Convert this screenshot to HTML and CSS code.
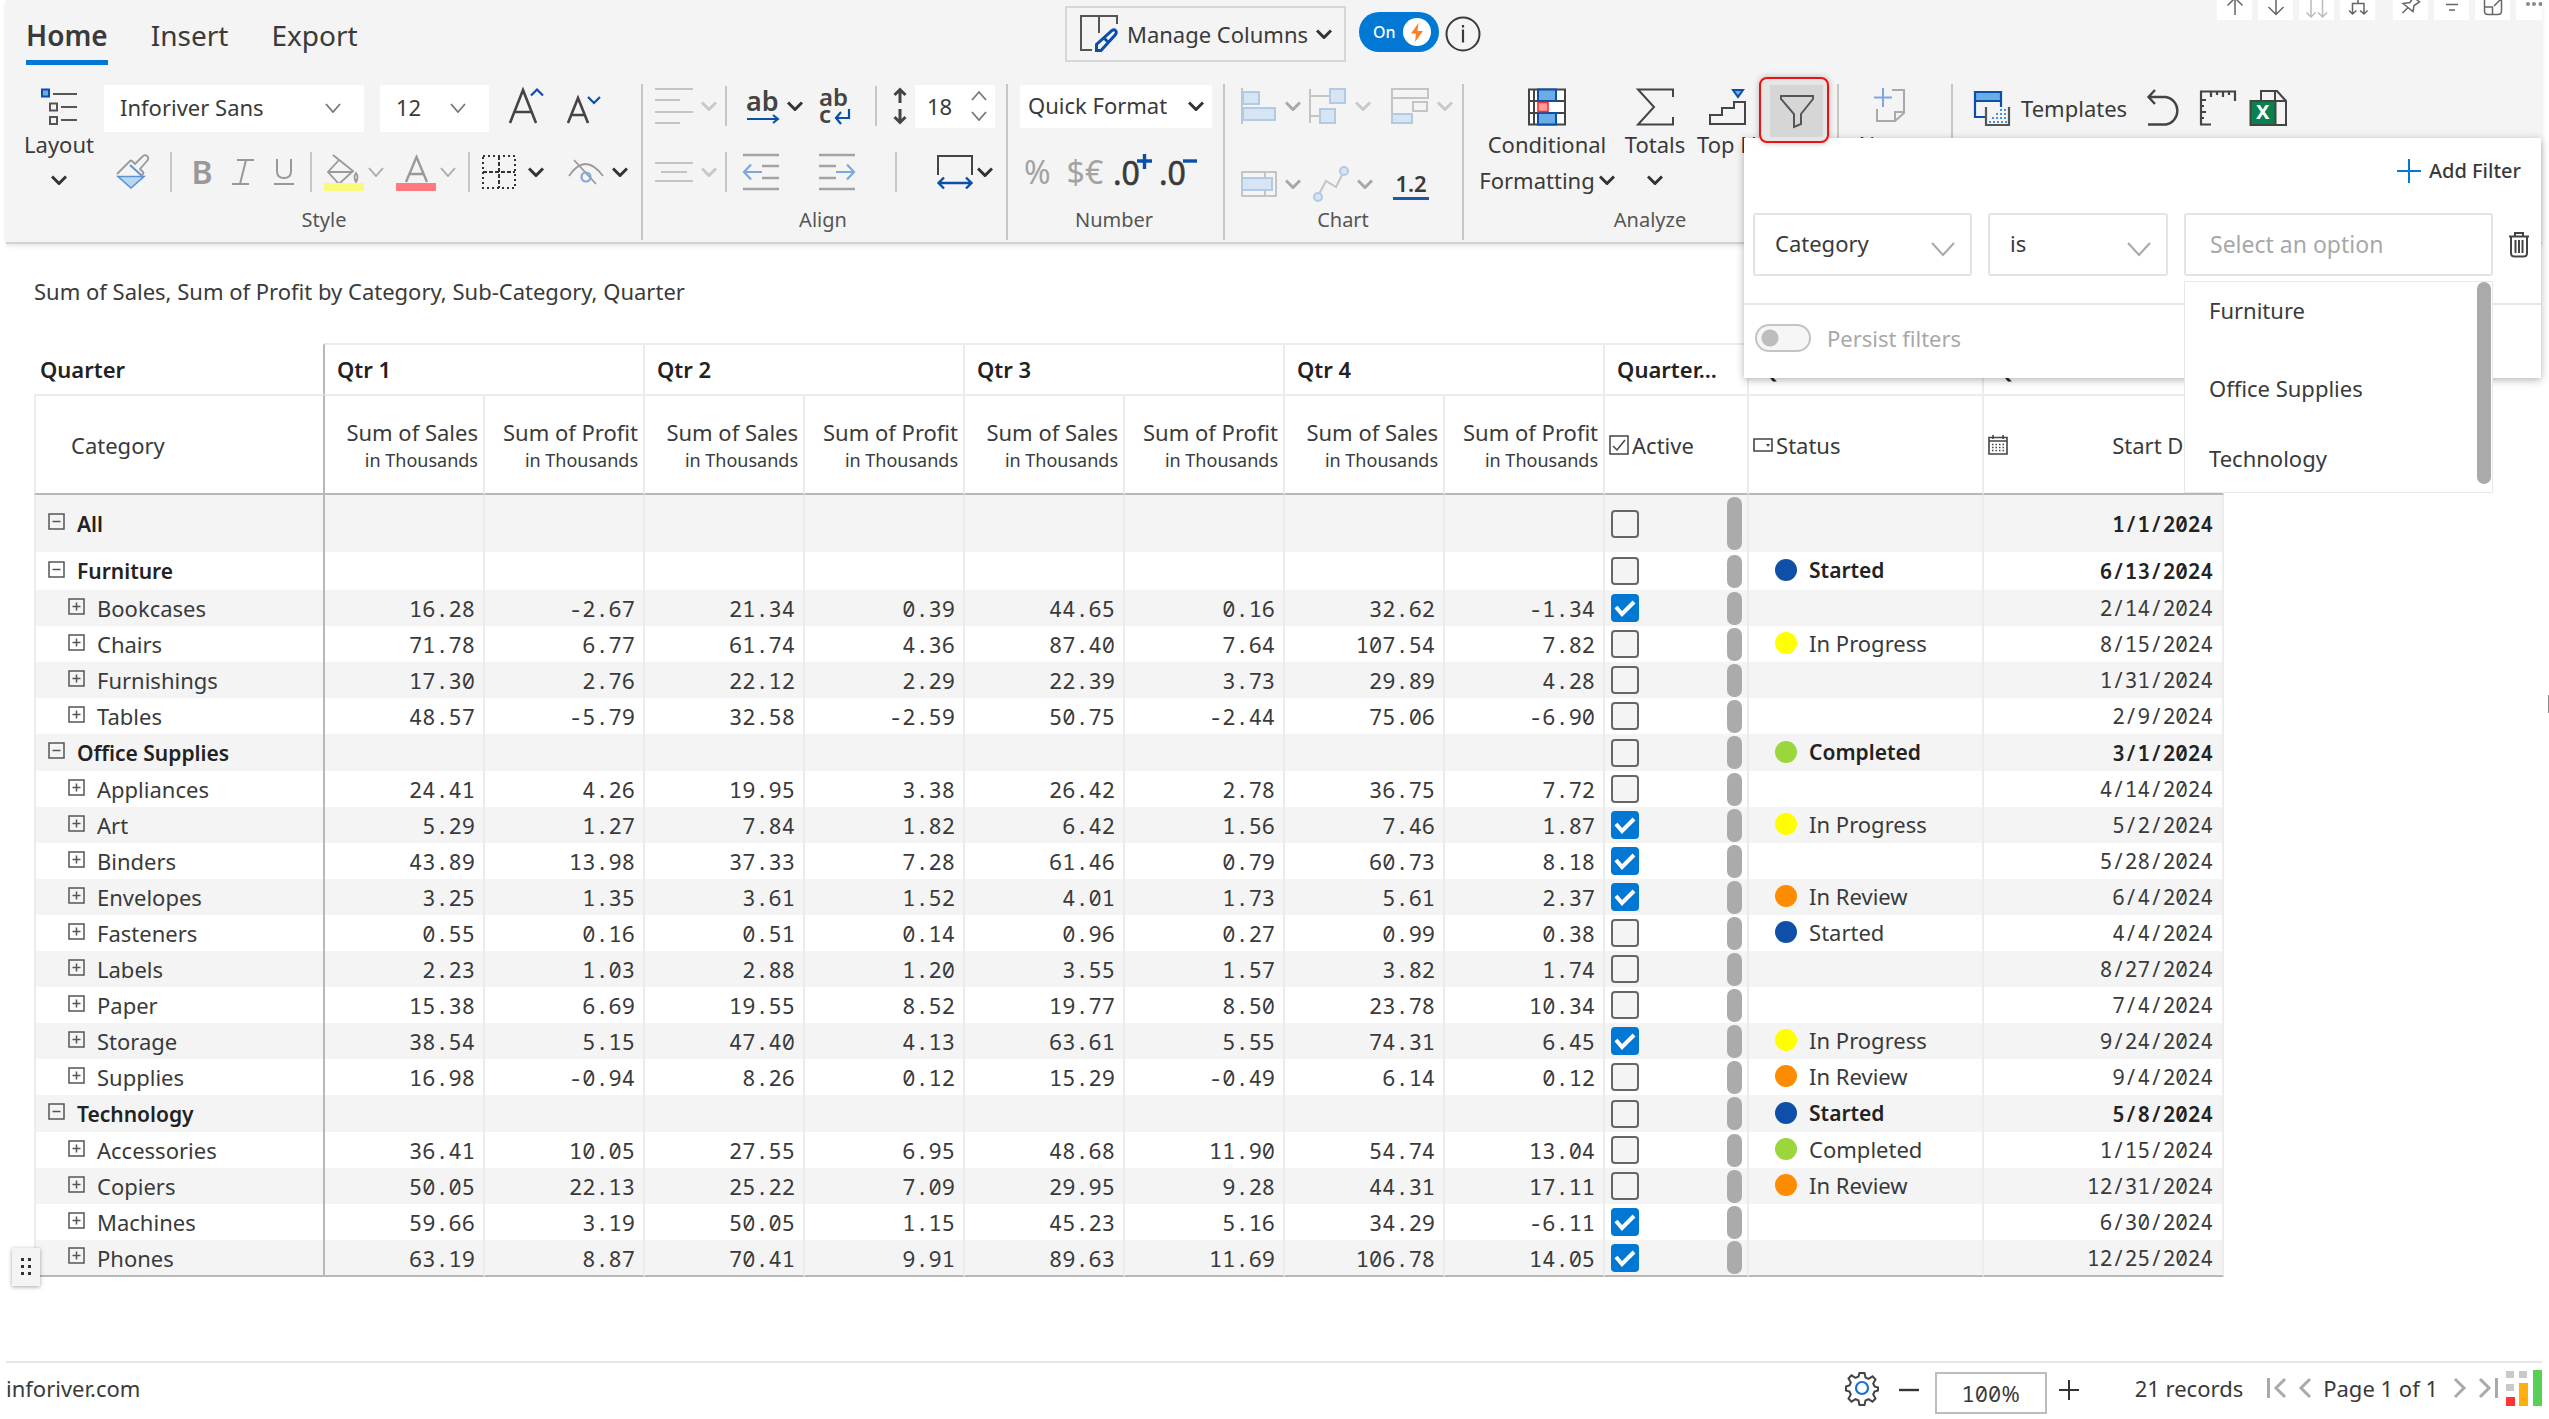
FILE: index.html
```html
<!DOCTYPE html>
<html lang="en">
<head>
<meta charset="utf-8">
<meta name="viewport" content="width=device-width, initial-scale=1">
<title>Inforiver</title>
<link rel="stylesheet" href="styles.css">
</head>
<body>
<svg class="defs" width="0" height="0" aria-hidden="true">
  <symbol id="chev" viewBox="0 0 16 10"><path d="M1 1.500l7 7 7-7" fill="none" stroke="currentColor" stroke-width="3"/></symbol>
  <symbol id="chev-thin" viewBox="0 0 16 10"><path d="M1 1l7 8 7-8" fill="none" stroke="currentColor" stroke-width="1.800"/></symbol>
</svg>

<header class="ribbon">
  <div class="visual-tools">
    <button class="vt" aria-label="Drill up"><svg width="35" height="20" viewBox="0 0 35 20"><path d="M18 15V-6M10.500 5.500L18-2l7.500 7.500"/></svg></button>
    <button class="vt" aria-label="Drill down"><svg width="35" height="20" viewBox="0 0 35 20"><path d="M18-6v20M10.500 7l7.500 7.500L25.500 7"/></svg></button>
    <button class="vt faint" aria-label="Next level"><svg width="35" height="20" viewBox="0 0 35 20"><path d="M12-4v20M23.500-4v20M7.500 12.500L12 17l4.500-4.500M19 12.500l4.500 4.500 4.500-4.500"/></svg></button>
    <button class="vt" aria-label="Expand all"><svg width="35" height="20" viewBox="0 0 35 20"><path d="M18-4v7M12.500 14V3.500H24V14M9 10.500l3.500 3.500 4-3.500M20 10.500l4 3.500 3.500-3.500"/></svg></button>
    <button class="vt vt-gap" aria-label="Pin"><svg width="35" height="20" viewBox="0 0 35 20"><path d="M9.500 13l5-5M10 3.500l10 8 1-6 5.500-3.500-6-5-3.500 5.500z"/></svg></button>
    <button class="vt" aria-label="Filters"><svg width="35" height="20" viewBox="0 0 35 20"><path d="M12 4.500h12M15 10h6"/></svg></button>
    <button class="vt" aria-label="Focus mode"><svg width="35" height="20" viewBox="0 0 35 20"><path d="M9.500 0v11q0 3.500 3.500 3.500h10q3.500 0 3.500-3.500V0M9.500 7h8v7.500M19 6l7-7"/></svg></button>
    <button class="vt" aria-label="More"><svg width="35" height="20" viewBox="0 0 35 20"><circle cx="12" cy="4" r="2"/><circle cx="18" cy="4" r="2"/><circle cx="24.500" cy="4" r="2"/></svg></button>
  </div>

  <div class="topbar">
    <nav class="tabs">
      <a href="#home" class="tab active">Home</a>
      <a href="#insert" class="tab">Insert</a>
      <a href="#export" class="tab">Export</a>
    </nav>
    <div class="top-center">
      <button class="manage">
        <svg width="40" height="40" viewBox="0 0 40 40"><path d="M13 36H2V2h36v8M20 2v17" fill="none" stroke="#555" stroke-width="2"/><path d="M17.500 36.500v-6L33 16.500q2-1.500 3.500 0t0 4L22 36.500zM25 24l5 5" fill="none" stroke="#0b50a8" stroke-width="3"/></svg>
        <span>Manage Columns</span>
        <svg class="c-dark" width="16" height="10"><use href="#chev"/></svg>
      </button>
      <label class="switch"><input type="checkbox" role="switch" checked><span>On</span>
        <svg width="28" height="28" viewBox="0 0 28 28"><circle cx="14" cy="14" r="14" fill="#fff"/><path d="M15.500 5L8 15.500h5L12 24l8-11h-5.500z" fill="#ff7f27"/></svg></label>
      <button class="info" aria-label="Info"><svg width="36" height="36" viewBox="0 0 36 36"><circle cx="18" cy="18" r="16.500" fill="none" stroke="#3a3a3a" stroke-width="2"/><path d="M18 13.500v13M18 9v2.500" stroke="#3a3a3a" stroke-width="2.200"/></svg></button>
    </div>
  </div>

  <div class="groups">
    <section class="group g-style">
      <button class="tall w80">
        <svg width="38" height="38" viewBox="0 0 38 38"><g fill="none" stroke="#0b50a8" stroke-width="2"><rect x="2" y="1.500" width="7" height="7" fill="#6aace6"/></g><g fill="none" stroke="#555" stroke-width="2"><rect x="10" y="15.500" width="7" height="7"/><rect x="10" y="29" width="7" height="7"/><path d="M13 6h24M21 19h16M21 32h16"/></g></svg>
        <span>Layout</span>
        <span class="line"><svg class="c-dark" width="16" height="10"><use href="#chev"/></svg></span>
      </button>
      <div class="stack">
        <div class="row">
          <div class="sel font"><select aria-label="Font"><option>Inforiver Sans</option></select><svg class="c-mid" width="18" height="10"><use href="#chev-thin"/></svg></div>
          <div class="sel size m16"><select aria-label="Font size"><option>12</option></select><svg class="c-mid" width="18" height="10"><use href="#chev-thin"/></svg></div>
          <button class="ib m20" aria-label="Grow font"><svg width="34" height="42" viewBox="0 0 34 42"><path d="M1 36L14 3l13 33M6 25h16" fill="none" stroke="#444" stroke-width="2.600"/><path d="M22 8.500l6-6 6 6" fill="none" stroke="#0b50a8" stroke-width="2.200"/></svg></button>
          <button class="ib m24" aria-label="Shrink font"><svg width="34" height="42" viewBox="0 0 34 42"><path d="M1 36l10-25 10 25M5 28h12" fill="none" stroke="#444" stroke-width="2.600"/><path d="M21 10l6 6 6-6" fill="none" stroke="#0b50a8" stroke-width="2.200"/></svg></button>
        </div>
        <div class="row row2">
          <button class="ib m12" aria-label="Format painter"><svg width="34" height="34" viewBox="0 0 34 34"><path d="M1 19L14 6q1-1 2 0l3 3 8-8q3-2 5 1 1 2-1 4l-7 8 3 3q1 1 0 2l-3 3" fill="none" stroke="#999" stroke-width="1.800"/><path d="M14 10l11 10" stroke="#5b93d6" stroke-width="2"/><path d="M2 21.500h26L15 33z" fill="#b9d7f2" stroke="#5b93d6" stroke-width="1.600"/></svg></button>
          <i class="sep m20"></i>
          <button class="ib bold m20">B</button>
          <button class="ib m20" aria-label="Italic"><svg width="22" height="26" viewBox="0 0 22 26"><path d="M5 1h17M0 25h17M14 1L8 25" fill="none" stroke="#999" stroke-width="2"/></svg></button>
          <button class="ib m20" aria-label="Underline"><svg width="20" height="26" viewBox="0 0 20 26"><path d="M3 0v12q0 7 7 7t7-7V0M0 25h20" fill="none" stroke="#999" stroke-width="2"/></svg></button>
          <i class="sep m16"></i>
          <button class="ib m12" aria-label="Fill colour"><svg width="40" height="38" viewBox="0 0 40 38"><path d="M9 2l20 16-14 13L4 19 15 7M4 19h25M32 29q-3-5 0-9 3 4 0 9z" fill="none" stroke="#999" stroke-width="1.800"/><path d="M0 30h40v8H0z" fill="#fbfb7b"/></svg></button>
          <svg class="c-soft m4" width="16" height="10"><use href="#chev-thin"/></svg>
          <button class="ib m12" aria-label="Font colour"><svg width="40" height="38" viewBox="0 0 40 38"><path d="M10 29L20.500 4 31 29M13 21h15" fill="none" stroke="#999" stroke-width="2.400"/><path d="M0 30h40v8H0z" fill="#ff7a80"/></svg></button>
          <svg class="c-soft m4" width="16" height="10"><use href="#chev-thin"/></svg>
          <i class="sep m12"></i>
          <button class="ib m12" aria-label="Borders"><svg width="34" height="34" viewBox="0 0 34 34"><path d="M1 1h32v32H1z" fill="none" stroke="#333" stroke-width="2" stroke-dasharray="2 3"/><path d="M17 1v32M1 17h32" stroke="#333" stroke-width="2" stroke-dasharray="4 2"/></svg></button>
          <svg class="c-dark m12" width="16" height="10"><use href="#chev"/></svg>
          <button class="ib m24" aria-label="Show or hide"><svg width="36" height="26" viewBox="0 0 36 26"><path d="M1 17Q17-7 35 17M6 1l22 24" fill="none" stroke="#999" stroke-width="1.800"/><circle cx="18" cy="18" r="4.500" fill="none" stroke="#7fa7db" stroke-width="2.200"/></svg></button>
          <svg class="c-dark m8" width="16" height="10"><use href="#chev"/></svg>
        </div>
      </div>
      <h2 class="name">Style</h2>
    </section>

    <section class="group g-align">
      <div class="stack">
        <div class="row">
          <button class="ib m12" aria-label="Horizontal align"><svg width="38" height="36" viewBox="0 0 38 36"><path d="M0 1h38M0 12h25M0 24h38M0 35h25" stroke="#c4c4c4" stroke-width="2"/></svg></button>
          <svg class="c-faint m8" width="16" height="10"><use href="#chev"/></svg>
          <i class="sep m8"></i>
          <button class="ib m20" aria-label="Overflow text"><svg width="32" height="36" viewBox="0 0 32 36"><text x="-1" y="23" font-size="27" font-weight="600" fill="#444">ab</text><path d="M0 31h30M26 27l5 4-5 4" fill="none" stroke="#0b50a8" stroke-width="2"/></svg></button>
          <svg class="c-dark m8" width="16" height="10"><use href="#chev"/></svg>
          <button class="ib m16" aria-label="Wrap text"><svg width="32" height="38" viewBox="0 0 32 38"><text font-size="24" font-weight="600" fill="#444"><tspan x="0" y="19">ab</tspan><tspan x="0" y="36">c</tspan></text><path d="M30 22v9H17M22 25l-5 6 5 6" fill="none" stroke="#0b50a8" stroke-width="2.200"/></svg></button>
          <i class="sep m24"></i>
          <svg class="m16" width="14" height="38" viewBox="0 0 14 38"><path d="M7 16V2M1.500 8L7 2.500 12.500 8M7 22v14M1.500 30l5.500 5.500 5.500-5.500" fill="none" stroke="#444" stroke-width="3"/></svg>
          <div class="spin m8"><input type="text" value="18" aria-label="Row height"><span class="spin-b"><svg class="c-mid" width="16" height="10" viewBox="0 0 16 10"><path d="M1 9l7-8 7 8" fill="none" stroke="currentColor" stroke-width="1.800"/></svg><svg class="c-mid" width="16" height="10"><use href="#chev-thin"/></svg></span></div>
        </div>
        <div class="row row2">
          <button class="ib m12" aria-label="Vertical align"><svg width="38" height="20" viewBox="0 0 38 20"><path d="M0 1h38M6 10h26M0 19h38" stroke="#c4c4c4" stroke-width="2"/></svg></button>
          <svg class="c-faint m8" width="16" height="10"><use href="#chev"/></svg>
          <i class="sep m8"></i>
          <button class="ib m16" aria-label="Decrease indent"><svg width="36" height="36" viewBox="0 0 36 36"><path d="M0 1h36M19 12h17M19 24h17M0 35h36" stroke="#a3a3a3" stroke-width="2.600"/><path d="M19 18H1M8 10.500L1 18l7 7.500" fill="none" stroke="#7fa7db" stroke-width="2.200"/></svg></button>
          <button class="ib m40" aria-label="Increase indent"><svg width="36" height="36" viewBox="0 0 36 36"><path d="M0 1h36M0 12h17M0 24h17M0 35h36" stroke="#a3a3a3" stroke-width="2.600"/><path d="M17 18h18M28 10.500l7 7.500-7 7.500" fill="none" stroke="#7fa7db" stroke-width="2.200"/></svg></button>
          <i class="sep m40"></i>
          <button class="ib m40" aria-label="Column width"><svg width="36" height="36" viewBox="0 0 36 36"><path d="M1 21V2h34v19" fill="none" stroke="#444" stroke-width="2"/><path d="M2 29h32M7 23.500L1.500 29 7 34.500M29 23.500l5.500 5.500-5.500 5.500" fill="none" stroke="#0b50a8" stroke-width="2.400"/></svg></button>
          <svg class="c-dark m4" width="16" height="10"><use href="#chev"/></svg>
        </div>
      </div>
      <h2 class="name">Align</h2>
    </section>

    <section class="group g-number">
      <div class="stack">
        <div class="row">
          <div class="sel quick m12"><select aria-label="Number format"><option>Quick Format</option></select><svg class="c-dark" width="16" height="10"><use href="#chev"/></svg></div>
        </div>
        <div class="row row2">
          <button class="ib num pale m16">%</button>
          <button class="ib num pale m16">$€</button>
          <button class="ib m12" aria-label="Increase decimals"><svg width="38" height="40" viewBox="0 0 38 40"><text x="-2" y="33" font-size="32" fill="#3a3a3a" stroke="#3a3a3a" stroke-width=".6">.0</text><path d="M22 9h15M29.500 2v15" stroke="#0b50a8" stroke-width="3.400"/></svg></button>
          <button class="ib m8" aria-label="Decrease decimals"><svg width="38" height="40" viewBox="0 0 38 40"><text x="-2" y="33" font-size="32" fill="#3a3a3a" stroke="#3a3a3a" stroke-width=".6">.0</text><path d="M22 9h14" stroke="#0b50a8" stroke-width="3.400"/></svg></button>
        </div>
      </div>
      <h2 class="name">Number</h2>
    </section>

    <section class="group g-chart">
      <div class="stack">
        <div class="row">
          <button class="ib m16" aria-label="Bar chart"><svg width="36" height="36" viewBox="0 0 36 36"><path d="M1 0v36" stroke="#c4c4c4" stroke-width="2"/><path d="M2 4h16v12H2zM2 20h32v12H2z" fill="#d5e5f4" stroke="#b3c9e4" stroke-width="2"/></svg></button>
          <svg class="c-soft m8" width="16" height="10"><use href="#chev"/></svg>
          <button class="ib m8" aria-label="Waterfall chart"><svg width="38" height="36" viewBox="0 0 38 36"><path d="M1 1v34M1 8h20M1 28h10" stroke="#c4c4c4" stroke-width="2"/><path d="M21 1h15v14H21zM11 21h15v14H11z" fill="#d5e5f4" stroke="#b3c9e4" stroke-width="2"/></svg></button>
          <svg class="c-faint m8" width="16" height="10"><use href="#chev"/></svg>
          <button class="ib m20" aria-label="Variance chart"><svg width="38" height="36" viewBox="0 0 38 36"><path d="M1 25V1h36v9H1M22 14h14v9H22z" fill="none" stroke="#c4c4c4" stroke-width="2"/><path d="M1 26h20v9H1z" fill="#d5e5f4" stroke="#b3c9e4" stroke-width="2"/></svg></button>
          <svg class="c-faint m8" width="16" height="10"><use href="#chev"/></svg>
        </div>
        <div class="row row2 low">
          <button class="ib m16" aria-label="Bullet chart"><svg width="36" height="26" viewBox="0 0 36 26"><path d="M1 1h34v24H1zM24 1v24" fill="none" stroke="#c4c4c4" stroke-width="2"/><path d="M1 7h30v12H1z" fill="#d5e5f4" stroke="#b3c9e4" stroke-width="2"/></svg></button>
          <svg class="c-soft m8" width="16" height="10"><use href="#chev"/></svg>
          <button class="ib m12" aria-label="Sparkline"><svg width="36" height="36" viewBox="0 0 36 36"><path d="M6 28l7-13 10 6 7-14" fill="none" stroke="#c4c4c4" stroke-width="2"/><g fill="#d5e5f4" stroke="#b3c9e4" stroke-width="2"><circle cx="5" cy="31" r="4"/><circle cx="31" cy="5" r="4"/></g></svg></button>
          <svg class="c-soft m8" width="16" height="10"><use href="#chev"/></svg>
          <button class="ib onetwo m20">1.2</button>
        </div>
      </div>
      <h2 class="name">Chart</h2>
    </section>

    <section class="group g-analyze">
      <button class="tall w140">
        <svg width="38" height="38" viewBox="0 0 38 38"><path d="M1 1.500h36v35H1zM1 13h36M1 25h36M6 1v36" fill="#fff" stroke="#444" stroke-width="2"/><path d="M10 1.500h18V13H10zM10 25h18v11.500H10z" fill="#6aace6" stroke="#0b50a8" stroke-width="2"/><path d="M10 14.500h10v9H10z" fill="#ff9a9a" stroke="#e33" stroke-width="1.600"/></svg>
        <span>Conditional</span>
        <span class="line">Formatting <svg class="c-dark" width="16" height="10"><use href="#chev"/></svg></span>
      </button>
      <button class="tall w72">
        <svg width="38" height="38" viewBox="0 0 38 38"><path d="M37 9V1.500H2L18 19 2 36.500h35V29" fill="none" stroke="#444" stroke-width="2"/></svg>
        <span>Totals</span>
        <span class="line"><svg class="c-dark" width="16" height="10"><use href="#chev"/></svg></span>
      </button>
      <button class="tall w72">
        <svg width="38" height="38" viewBox="0 0 38 38"><path d="M2 36V27h12v-7h12v-6h11v22z" fill="none" stroke="#444" stroke-width="2"/><path d="M25 2h10l-5 7z" fill="#6aace6" stroke="#0b50a8" stroke-width="2"/></svg>
        <span>Top N</span>
      </button>
      <button class="filter-btn" aria-label="Filter" aria-expanded="true"><span><svg width="36" height="34" viewBox="0 0 36 34"><path d="M2 2h32v3L22 20v10l-7 3V20L2 5z" fill="none" stroke="#555" stroke-width="2"/></svg></span></button>
      <h2 class="name">Analyze</h2>
    </section>

    <section class="group g-notes">
      <button class="tall w100">
        <svg width="38" height="38" viewBox="0 0 38 38"><path d="M22 2h12v23l-9 8H7V21M34 24h-9v9" fill="none" stroke="#aaa" stroke-width="2"/><path d="M4 9.500h18M13 0v19" stroke="#7fa7db" stroke-width="2"/></svg>
        <span>Notes</span>
      </button>
    </section>

    <section class="group g-last">
      <div class="row">
        <button class="templates m20"><svg width="38" height="38" viewBox="0 0 38 38"><path d="M2 3h26v9H2z" fill="#6aace6"/><path d="M12 28H2V3h26v15M2 12h26" fill="none" stroke="#0b50a8" stroke-width="2.200"/><path d="M13 18v18h23V18" fill="none" stroke="#555" stroke-width="2.200"/><path d="M16 33h18M19 29h15M23 25h11M27 21h7" stroke="#4a90d9" stroke-width="2" stroke-dasharray="2 2"/></svg><span>Templates</span></button>
        <button class="ib m20" aria-label="Undo"><svg width="36" height="36" viewBox="0 0 36 36"><path d="M1 7h18a14 14 0 0 1 0 27.500H1M8 0L1.500 7 8 14" fill="none" stroke="#444" stroke-width="2.400"/></svg></button>
        <button class="ib m16" aria-label="Ruler"><svg width="38" height="36" viewBox="0 0 38 36"><path d="M12 34.500H2V1.500h34V11M12 2v5M18 2v3M24 2v5M30 2v3M2 10h5M2 16h3M2 22h5M2 28h3" fill="none" stroke="#444" stroke-width="2.200"/></svg></button>
        <button class="ib m12" aria-label="Export to Excel"><svg width="38" height="38" viewBox="0 0 38 38"><path d="M12 12V2h16l9 10v24H26V2M26 12h11" fill="none" stroke="#444" stroke-width="2"/><path d="M1.500 12h25v24h-25z" fill="#07814d" stroke="#444" stroke-width="2"/><text x="7" y="30" font-size="20" font-weight="700" fill="#fff">X</text></svg></button>
      </div>
    </section>
  </div>

  <div class="filter-pop" role="dialog" aria-label="Filters">
    <div class="pop-top"><button class="add"><svg width="24" height="24" viewBox="0 0 24 24"><path d="M0 12h24M12 0v24" stroke="#0078d4" stroke-width="2"/></svg>Add Filter</button></div>
    <div class="pop-row">
      <div class="sel box b-cat"><select aria-label="Field"><option>Category</option></select><svg class="c-soft" width="24" height="14" viewBox="0 0 24 14"><path d="M1 1l11 12L23 1" fill="none" stroke="currentColor" stroke-width="2"/></svg></div>
      <div class="sel box b-is"><select aria-label="Operator"><option>is</option></select><svg class="c-soft" width="24" height="14" viewBox="0 0 24 14"><path d="M1 1l11 12L23 1" fill="none" stroke="currentColor" stroke-width="2"/></svg></div>
      <div class="combo">
        <input type="text" placeholder="Select an option" aria-label="Value">
        <ul class="options" role="listbox">
          <li role="option">Furniture</li><li role="option">Office Supplies</li><li role="option">Technology</li>
        </ul>
      </div>
      <button class="ib" aria-label="Delete filter"><svg width="20" height="26" viewBox="0 0 20 26"><path d="M0 4.500h20M6 4V1h8v3M2 5v16q0 3.500 3.500 3.500h9q3.500 0 3.500-3.500V5M6.500 8v13M10 8v13M13.500 8v13" fill="none" stroke="#444" stroke-width="2"/></svg></button>
    </div>
    <label class="persist"><input type="checkbox" role="switch">Persist filters</label>
  </div>
</header>

<main class="content">
  <h1 class="title">Sum of Sales, Sum of Profit by Category, Sub-Category, Quarter</h1>
  <div class="grid-wrap">
    <table class="grid">
      <colgroup><col class="c-cat"><col span="8" class="c-val"><col class="c-act"><col class="c-sta"><col class="c-date"></colgroup>
      <thead>
        <tr class="h1"><th class="corner">Quarter</th><th colspan="2">Qtr 1</th><th colspan="2">Qtr 2</th><th colspan="2">Qtr 3</th><th colspan="2">Qtr 4</th><th>Quarter...</th><th>Quarter...</th><th>Quarter...</th></tr>
        <tr class="h2"><th class="cat">Category</th>
          <th class="m">Sum of Sales<small>in Thousands</small></th><th class="m">Sum of Profit<small>in Thousands</small></th>
          <th class="m">Sum of Sales<small>in Thousands</small></th><th class="m">Sum of Profit<small>in Thousands</small></th>
          <th class="m">Sum of Sales<small>in Thousands</small></th><th class="m">Sum of Profit<small>in Thousands</small></th>
          <th class="m">Sum of Sales<small>in Thousands</small></th><th class="m">Sum of Profit<small>in Thousands</small></th>
          <th class="x"><div><svg width="20" height="20" viewBox="0 0 20 20"><path d="M1 1h18v18H1zM4 11l4 4 8-10" fill="none" stroke="#444" stroke-width="1.500"/></svg>Active</div></th>
          <th class="x"><div><svg width="20" height="14" viewBox="0 0 20 14"><path d="M1 1h18v12H1z" fill="none" stroke="#444" stroke-width="1.600"/><path d="M13 6h4l-2 3z" fill="#444"/></svg>Status</div></th>
          <th class="x"><div class="spread"><svg width="20" height="20" viewBox="0 0 20 20"><path d="M1 2.500h18V19H1zM1 6h18M5 0v4M15 0v4" fill="none" stroke="#444" stroke-width="1.600"/><path d="M4 9.500h12M4 12.500h12M4 15.500h12" stroke="#444" stroke-width="1.500" stroke-dasharray="1.500 2"/></svg>Start Date</div></th>
        </tr>
      </thead>
      <tbody id="rows"></tbody>
    </table>
    <button class="handle" aria-label="Move"><svg width="10" height="18" viewBox="0 0 10 18"><path d="M0 0h3v3H0zM7 0h3v3H7zM0 7h3v3H0zM7 7h3v3H7zM0 14h3v3H0zM7 14h3v3H7z" fill="#333"/></svg></button>
  </div>
  <i class="edge"></i>
</main>

<footer class="footer">
  <a class="site" href="#inforiver">inforiver.com</a>
  <div class="foot-tools">
    <button class="ib" aria-label="Settings"><svg width="34" height="34" viewBox="0 0 34 34"><path d="M14.500 2h5l1 4.500 3 1.300 4-2.500 3 3.200-2.300 4 1.300 3 3.500 1v3l-3.500 1-1.300 3 2.300 4-3 3.200-4-2.500-3 1.300-1 4.500h-5l-1-4.500-3-1.300-4 2.500-3-3.200 2.300-4-1.300-3L1 19.500v-4l3.500-1 1.300-3-2.300-4 3-3.200 4 2.500 3-1.300z" fill="none" stroke="#444" stroke-width="2"/><circle cx="17" cy="17" r="6" fill="none" stroke="#1a6fd0" stroke-width="2.200"/></svg></button>
    <button class="ib m20" aria-label="Zoom out"><svg width="20" height="20" viewBox="0 0 20 20"><path d="M0 12h20" stroke="#333" stroke-width="2.400"/></svg></button>
    <label class="zoom m16"><input type="text" value="100" aria-label="Zoom">%</label>
    <button class="ib m12" aria-label="Zoom in"><svg width="20" height="20" viewBox="0 0 20 20"><path d="M0 12h20M10 2v20" stroke="#333" stroke-width="2"/></svg></button>
    <span class="records">21 records</span>
    <button class="ib m24" aria-label="First page"><svg width="20" height="20" viewBox="0 0 20 20"><path d="M1.500 0v20M18 1l-9 9 9 9" fill="none" stroke="#aaa" stroke-width="3"/></svg></button>
    <button class="ib m12" aria-label="Previous page"><svg width="12" height="20" viewBox="0 0 12 20"><path d="M11 1l-9 9 9 9" fill="none" stroke="#aaa" stroke-width="3"/></svg></button>
    <span class="m12">Page 1 of 1</span>
    <button class="ib m16" aria-label="Next page"><svg width="12" height="20" viewBox="0 0 12 20"><path d="M1 1l9 9-9 9" fill="none" stroke="#aaa" stroke-width="3"/></svg></button>
    <button class="ib m12" aria-label="Last page"><svg width="20" height="20" viewBox="0 0 20 20"><path d="M2 1l9 9-9 9M18.500 0v20" fill="none" stroke="#aaa" stroke-width="3"/></svg></button>
    <svg class="m8" width="36" height="36" viewBox="0 0 36 36"><path d="M0 1h8v7H0zM13 1h8v7h-8zM0 14h8v7H0z" fill="#c9c9c9"/><path d="M0 27h9v9H0z" fill="#ff3535"/><path d="M13 13h9v23h-9z" fill="#ffae0d"/><path d="M27 0h9v36h-9z" fill="#57d053"/></svg>
  </div>
</footer>
<script src="app.js"></script>
</body>
</html>
```
FILE: styles.css
```css
* { box-sizing: border-box; }
body {
  margin: 0;
  min-height: 100vh;
  display: flex;
  flex-direction: column;
  background: #fff;
  color: #3a3a3a;
  font: 22px/28px "Noto Sans", "Open Sans", sans-serif;
}
button, input, select { font: inherit; color: inherit; margin: 0; }
button { background: none; border: 0; padding: 0; cursor: pointer; }
svg { display: block; flex: none; overflow: visible; }
.defs { position: absolute; }
.m4 { margin-left: 4px; }
.m8 { margin-left: 8px; }
.m12 { margin-left: 12px; }
.m16 { margin-left: 16px; }
.m20 { margin-left: 20px; }
.m24 { margin-left: 24px; }
.m40 { margin-left: 40px; }
.c-dark { color: #333; }
.c-mid { color: #777; }
.c-soft { color: #a8a8a8; }
.c-faint { color: #c9c9c9; }

/* Ribbon */
.ribbon {
  position: relative;
  z-index: 2;
  margin: 0 7px 0 6px;
  background: #f4f4f4;
  border-bottom: 2px solid #d2d2d2;
  box-shadow: 0 2px 4px rgba(0, 0, 0, .1);
}
.visual-tools {
  position: absolute;
  top: 0;
  right: 0;
  height: 20px;
  display: flex;
  gap: 6px;
  overflow: hidden;
}
.vt { width: 35px; height: 20px; background: #fff; }
.vt:last-child { margin-right: -9px; }
.vt-gap { margin-left: 12px; }
.vt svg { overflow: hidden; fill: none; stroke: #666; stroke-width: 1.5; }
.vt circle { fill: #888; stroke: none; }
.vt.faint svg { stroke: #bbb; }

.topbar {
  display: grid;
  grid-template-columns: 1fr auto 1fr;
  align-items: start;
  height: 84px;
}
.tabs { display: flex; gap: 43px; padding: 15px 0 0 20px; }
.tab {
  font-size: 28px;
  line-height: 40px;
  padding-bottom: 5px;
  border-bottom: 5px solid transparent;
  color: #3a3a3a;
  text-decoration: none;
}
.tab.active { font-weight: 600; border-color: #0078d4; }
.top-center { display: flex; align-items: center; padding: 6px 2px 0 0; }
.manage {
  display: flex;
  align-items: center;
  gap: 8px;
  height: 56px;
  padding: 0 12px;
  border: 2px solid #d6d6d6;
}
.switch {
  display: flex;
  align-items: center;
  justify-content: space-between;
  width: 80px;
  height: 40px;
  margin: 0 6px 4px 13px;
  padding: 0 8px 0 14px;
  border-radius: 20px;
  background: #0078d4;
  color: #fff;
  font-size: 16px;
  font-weight: 500;
}
.switch input { position: absolute; opacity: 0; }

.groups { display: flex; align-items: flex-start; padding-bottom: 2px; }
.group {
  display: grid;
  grid-template-columns: auto;
  grid-template-rows: 120px 36px;
  align-items: start;
  border-left: 2px solid #c6c6c6;
}
.group .name { grid-column: 1 / -1; }
.g-style { grid-template-columns: auto auto; border: 0; padding: 0 13px 0 14px; }
.g-align { padding-right: 11px; }
.g-number { padding-right: 11px; }
.g-chart { padding-right: 9px; }
.g-align .name, .g-number .name, .g-chart .name { padding-left: 8px; }
.g-analyze { grid-template-columns: auto auto auto auto; padding-left: 11px; }
.g-analyze .name { padding-right: 12px; }
.g-notes { padding-right: 12px; }
.name {
  margin: 0;
  text-align: center;
  font-size: 20px;
  line-height: 32px;
  font-weight: 400;
  color: #555;
}
.row { display: flex; align-items: center; height: 44px; }
.row2 { height: 40px; margin-top: 24px; }
.row2.low { margin-top: 36px; }
.g-style .row, .g-last .row { height: 48px; }
.g-style .row2 { height: 40px; margin-top: 20px; }
.ib { display: flex; align-items: center; justify-content: center; }
.sep { width: 2px; height: 40px; background: #c6c6c6; }
.tall {
  display: flex;
  flex-direction: column;
  align-items: center;
  padding-top: 4px;
  line-height: 36px;
}
.tall span { white-space: nowrap; }
.line { display: flex; align-items: center; gap: 4px; min-height: 36px; }
.w72 { width: 72px; }
.w80 { width: 84px; padding-right: 6px; }
.w100 { width: 100px; }
.w140 { width: 144px; }
.sel { position: relative; display: flex; align-items: center; background: #fff; }
.sel select {
  appearance: none;
  width: 100%;
  height: 47px;
  padding: 0 40px 2px 16px;
  border: 0;
  border-radius: 0;
  background: transparent;
}
.sel svg { position: absolute; right: 22px; pointer-events: none; }
.font { width: 260px; }
.size { width: 109px; }
.quick { width: 192px; }
.quick select { height: 43px; padding: 0 24px 2px 8px; }
.quick svg { right: 8px; }
.bold { width: 20px; font-size: 32px; font-weight: 600; color: #999; }
.num { font-size: 32px; line-height: 40px; }
.pale { color: #a3a3a3; }
.onetwo {
  width: 36px;
  font-weight: 600;
  border-bottom: 3px solid #1c57a8;
}
.spin { display: flex; align-items: center; width: 80px; height: 43px; background: #fff; }
.spin input { width: 56px; border: 0; padding: 0 0 0 12px; background: none; }
.spin-b { display: grid; gap: 10px; }
.filter-btn {
  position: relative;
  z-index: 3;
  width: 70px;
  height: 66px;
  margin: -7px 8px 0 -4px;
  padding: 6px 4px 4px 9px;
  border: 2px solid #f01010;
  border-radius: 8px;
  background: #e6e6e6;
  box-shadow: 0 0 6px rgba(0, 0, 0, .25);
}
.filter-btn span { display: grid; place-items: center; height: 100%; background: #d6d6d6; }
.templates { display: flex; align-items: center; gap: 10px; }

/* Filter popup */
.filter-pop {
  position: absolute;
  z-index: 2;
  top: 138px;
  right: 1px;
  width: 797px;
  background: #fff;
  box-shadow: 0 2px 8px rgba(0, 0, 0, .3);
}
.pop-top { display: flex; justify-content: flex-end; padding: 16px 20px 0 0; }
.add { display: flex; align-items: center; gap: 8px; font-size: 20px; line-height: 34px; font-weight: 500; }
.pop-row {
  display: flex;
  align-items: center;
  gap: 16px;
  padding: 25px 12px 27px 9px;
  border-bottom: 2px solid #e8e8e8;
}
.box, .combo input { height: 63px; border: 2px solid #e4e4e4; border-radius: 3px; }
.box select { padding: 0 40px 4px 20px; }
.box svg { right: 15px; top: 27px; }
.b-cat { width: 219px; }
.b-is { width: 180px; }
.combo { position: relative; flex: 1; }
.combo input { display: block; width: 100%; padding: 0 24px 2px; }
.combo input::placeholder { color: #a8a8a8; opacity: 1; }
.combo input:placeholder-shown { font-size: 23px; }
.options {
  position: absolute;
  top: 68px;
  left: 0;
  right: 0;
  height: 212px;
  margin: 0;
  padding: 0 24px;
  display: grid;
  grid-template-rows: 56px 100px 40px;
  align-items: center;
  list-style: none;
  background: #fff;
  border: 1px solid #e8e8e8;
}
.options::after {
  content: "";
  position: absolute;
  top: 0;
  right: 1px;
  width: 14px;
  height: 202px;
  border-radius: 7px;
  background: #aaa;
}
.persist { display: flex; align-items: center; gap: 16px; height: 73px; padding: 0 0 8px 11px; color: #a8a8a8; }
.persist input {
  appearance: none;
  width: 56px;
  height: 28px;
  border: 2px solid #c4c4c4;
  border-radius: 14px;
  background: radial-gradient(circle at 13px 12px, #bdbdbd 8px, #f6f6f6 9px);
}

/* Data grid */
.content { flex: 1; position: relative; padding: 32px 28px 0 34px; }
.title { margin: 0 0 37px; font-size: 22px; line-height: 30px; font-weight: 400; }
.grid-wrap { position: relative; }
.grid { width: 2190px; table-layout: fixed; border-collapse: separate; border-spacing: 0; }
.c-cat { width: 291px; }
.c-val { width: 160px; }
.c-act { width: 144px; }
.c-sta { width: 235px; }
.c-date { width: 240px; }
.grid th, .grid td { padding: 0; border-right: 2px solid #ececec; white-space: nowrap; text-align: left; font-weight: 400; }
.grid th:first-child, .grid td:first-child { border-right-color: #b8b8b8; }
.grid .h1 { height: 51px; }
.grid .h1 th { padding: 0 0 2px 12px; border-top: 2px solid #ececec; font-weight: 600; color: #222; }
.grid .h1 .corner { padding-left: 6px; border-top-color: transparent; }
.grid .h2 { height: 101px; }
.grid .h2 th { border-top: 2px solid #ececec; border-bottom: 2px solid #b8b8b8; }
.grid .h2 .cat { padding-left: 35px; border-left: 2px solid #ececec; }
.grid .h2 .m { text-align: right; padding: 2px 5px 0 0; }
.grid small { display: block; font-size: 18px; }
.x div { display: flex; align-items: center; gap: 3px; padding-left: 4px; }
.x .spread { justify-content: space-between; padding-right: 6px; }
.grid tbody tr { height: 36px; line-height: 32px; }
.grid tbody tr:nth-child(odd) { background: #f4f4f4; }
.grid tbody .all { height: 57px; }
.grid tbody .first { height: 38px; }
.grid tbody .sub { height: 37px; }
.grid tbody tr:last-child { height: 37px; }
.grid td:first-child { border-left: 2px solid #ececec; }
.grid tr:last-child td { border-bottom: 2px solid #b8b8b8; }
.grid .n, .grid .d { font-family: "Noto Sans Mono", "Liberation Mono", monospace; text-align: right; }
.grid .n { padding-right: 8px; }
.grid .d { padding-right: 9px; font-size: 21px; }
.grid .parent td { font-size: 21px; font-weight: 600; color: #222; }
.name-cell { display: flex; align-items: center; gap: 12px; padding-left: 32px; }
.parent .name-cell { padding-left: 12px; }
.exp { width: 17px; height: 17px; margin-bottom: 4px; }
.act { display: flex; align-items: center; justify-content: space-between; padding: 0 5px 0 6px; }
.act input {
  appearance: none;
  width: 28px;
  height: 28px;
  border: 2px solid #666;
  border-radius: 4px;
  background: #f4f4f4;
}
.act input:checked {
  border-color: #0078d4;
  background: #0078d4 url("data:image/svg+xml,%3Csvg xmlns='http://www.w3.org/2000/svg' viewBox='0 0 24 24'%3E%3Cpath d='M3 11l6 7L21 6' fill='none' stroke='%23fff' stroke-width='4'/%3E%3C/svg%3E") center / 24px no-repeat;
}
.pill { width: 15px; height: 33px; border-radius: 7px; background: #ababab; }
.all .pill { height: 53px; }
.st { display: flex; align-items: center; gap: 12px; padding: 0 0 2px 26px; line-height: 30px; }
.dot { width: 22px; height: 22px; border-radius: 50%; }
.started { background: #0f4fa8; }
.progress { background: #ffff00; }
.completed { background: #9bd63c; }
.review { background: #ff8c00; }
.handle {
  position: absolute;
  left: -22px;
  bottom: -9px;
  width: 28px;
  height: 38px;
  display: grid;
  place-items: center;
  background: #f4f4f4;
  box-shadow: 0 1px 4px rgba(0, 0, 0, .35);
}
.edge { position: absolute; right: 0; top: 451px; width: 1px; height: 18px; background: #888; }

/* Footer */
.footer {
  display: flex;
  align-items: center;
  justify-content: space-between;
  height: 58px;
  margin: 0 7px 0 6px;
  padding-bottom: 6px;
  border-top: 2px solid #e6e6e6;
}
.site { color: #3a3a3a; text-decoration: none; }
.foot-tools { display: flex; align-items: center; }
.zoom {
  display: flex;
  align-items: center;
  justify-content: center;
  width: 112px;
  height: 42px;
  margin-top: 10px;
  border: 2px solid #bdbdbd;
}
.zoom input { width: 40px; padding: 0; border: 0; background: none; font-family: "Noto Sans Mono", "Liberation Mono", monospace; }
.records { margin-left: 56px; }
```
FILE: app.js
```js
const dots = { Started: 'started', 'In Progress': 'progress', Completed: 'completed', 'In Review': 'review' };

// name, eight measures, active, status, start date; null measures mark a parent row
const rows = [
  ['All', null, 0, '', '1/1/2024', 'all'],
  ['Furniture', null, 0, 'Started', '6/13/2024', 'first'],
  ['Bookcases', '16.28 -2.67 21.34 0.39 44.65 0.16 32.62 -1.34', 1, '', '2/14/2024'],
  ['Chairs', '71.78 6.77 61.74 4.36 87.40 7.64 107.54 7.82', 0, 'In Progress', '8/15/2024'],
  ['Furnishings', '17.30 2.76 22.12 2.29 22.39 3.73 29.89 4.28', 0, '', '1/31/2024'],
  ['Tables', '48.57 -5.79 32.58 -2.59 50.75 -2.44 75.06 -6.90', 0, '', '2/9/2024'],
  ['Office Supplies', null, 0, 'Completed', '3/1/2024', 'sub'],
  ['Appliances', '24.41 4.26 19.95 3.38 26.42 2.78 36.75 7.72', 0, '', '4/14/2024'],
  ['Art', '5.29 1.27 7.84 1.82 6.42 1.56 7.46 1.87', 1, 'In Progress', '5/2/2024'],
  ['Binders', '43.89 13.98 37.33 7.28 61.46 0.79 60.73 8.18', 1, '', '5/28/2024'],
  ['Envelopes', '3.25 1.35 3.61 1.52 4.01 1.73 5.61 2.37', 1, 'In Review', '6/4/2024'],
  ['Fasteners', '0.55 0.16 0.51 0.14 0.96 0.27 0.99 0.38', 0, 'Started', '4/4/2024'],
  ['Labels', '2.23 1.03 2.88 1.20 3.55 1.57 3.82 1.74', 0, '', '8/27/2024'],
  ['Paper', '15.38 6.69 19.55 8.52 19.77 8.50 23.78 10.34', 0, '', '7/4/2024'],
  ['Storage', '38.54 5.15 47.40 4.13 63.61 5.55 74.31 6.45', 1, 'In Progress', '9/24/2024'],
  ['Supplies', '16.98 -0.94 8.26 0.12 15.29 -0.49 6.14 0.12', 0, 'In Review', '9/4/2024'],
  ['Technology', null, 0, 'Started', '5/8/2024', 'sub'],
  ['Accessories', '36.41 10.05 27.55 6.95 48.68 11.90 54.74 13.04', 0, 'Completed', '1/15/2024'],
  ['Copiers', '50.05 22.13 25.22 7.09 29.95 9.28 44.31 17.11', 0, 'In Review', '12/31/2024'],
  ['Machines', '59.66 3.19 50.05 1.15 45.23 5.16 34.29 -6.11', 1, '', '6/30/2024'],
  ['Phones', '63.19 8.87 70.41 9.91 89.63 11.69 106.78 14.05', 1, '', '12/25/2024'],
];

document.getElementById('rows').innerHTML = rows.map(([name, vals, on, status, date, cls]) => {
  const cells = vals ? vals.split(' ') : Array(8).fill('');
  const mark = vals ? 'M4.500 8.500h8M8.500 4.500v8' : 'M4.500 8.500h8';
  return `<tr class="${vals ? '' : 'parent ' + cls}">
    <td><div class="name-cell"><svg class="exp" viewBox="0 0 17 17"><path d="M1 1h15v15H1z${mark}" fill="none" stroke="#555" stroke-width="1.500"/></svg>${name}</div></td>
    ${cells.map(v => `<td class="n">${v}</td>`).join('')}
    <td><div class="act"><input type="checkbox" aria-label="${name} active"${on ? ' checked' : ''}><i class="pill"></i></div></td>
    <td>${status ? `<div class="st"><i class="dot ${dots[status]}"></i>${status}</div>` : ''}</td>
    <td class="d">${date}</td>
  </tr>`;
}).join('');
```
